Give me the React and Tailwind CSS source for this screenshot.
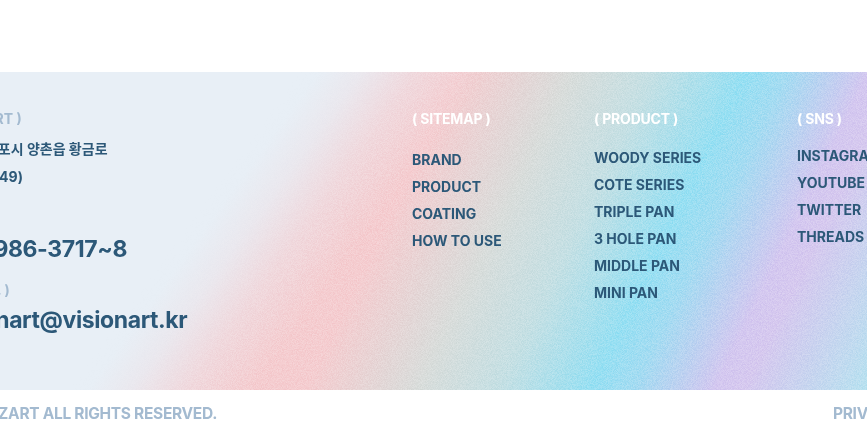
const font = { fontFamily: '"Inter","Noto Sans CJK KR",sans-serif' };

function Noise() {
  return (
    <svg className="absolute inset-0 w-full h-full opacity-[0.15] mix-blend-overlay [mask-image:linear-gradient(126deg,transparent_27%,black_40%)]" aria-hidden="true">
      <filter id="grain" colorInterpolationFilters="sRGB">
        <feTurbulence type="fractalNoise" baseFrequency="1.2" numOctaves="2" stitchTiles="stitch" />
        <feColorMatrix type="matrix" values="2.6 0 0 0 -0.8  2.6 0 0 0 -0.8  2.6 0 0 0 -0.8  0 0 0 0 1" />
      </filter>
      <rect width="100%" height="100%" filter="url(#grain)" />
    </svg>
  );
}

function Col({ title, items, width, listTop }) {
  return (
    <div className={width}>
      <div className="text-sm font-bold text-white leading-[20px] tracking-[-0.2px]">{title}</div>
      <ul className={`${listTop} flex flex-col gap-[7px]`}>
        {items.map((t) => (
          <li key={t} className="text-sm font-bold leading-[20px] text-[#2c5878] whitespace-nowrap">{t}</li>
        ))}
      </ul>
    </div>
  );
}

export default function App() {
  return (
    <div className="w-[867px] h-[446px] bg-white overflow-hidden" style={font}>
      <div className="h-[72px]" />
      <div className="relative h-[318px] overflow-hidden bg-[linear-gradient(126deg,#e8eff6_0%,#e8eff6_29%,rgba(232,239,246,0.8)_33%,rgba(232,239,246,0.35)_38%,rgba(232,239,246,0)_44%),linear-gradient(116deg,#f5cdd0_0%,#f5cdd0_45%,#d9dddb_56%,#c5e0e4_64%,#97e0f3_73%,#a4dcf2_77%,#d4c8f0_85%,#d6c9ef_88%,#b8e2f0_100%)]">
        <Noise />
        <div className="relative flex pt-[37px] -ml-[56px] w-[1100px]">
          <div className="w-[468px] shrink-0 text-[#2c5878]">
            <div className="ml-[9px] text-sm font-bold leading-[20px] text-[#a3bad0]">( BIZART )</div>
            <div className="mt-[10px] text-sm font-bold leading-[20px] -ml-[1px]">경기도 김포시 양촌읍 황금로</div>
            <div className="mt-[8px] ml-[4px] text-sm font-bold leading-[20px]">(우: 10049)</div>
            <div className="mt-[22px] text-sm font-bold leading-[20px] text-[#a3bad0]">( TEL. )</div>
            <div className="mt-[4px] text-[23px] font-bold leading-[32px] tracking-[-0.4px]">031-986-3717~8</div>
            <div className="mt-[15px] ml-[9px] text-sm font-bold leading-[20px] text-[#a3bad0]">( MAIL. )</div>
            <div className="mt-[4px] text-[23px] font-bold leading-[32px] tracking-[-0.4px]">visionart@visionart.kr</div>
          </div>
          <Col title="( SITEMAP )" width="w-[182px] shrink-0" listTop="mt-[21px]" items={["BRAND", "PRODUCT", "COATING", "HOW TO USE"]} />
          <Col title="( PRODUCT )" width="w-[203px] shrink-0" listTop="mt-[19px]" items={["WOODY SERIES", "COTE SERIES", "TRIPLE PAN", "3 HOLE PAN", "MIDDLE PAN", "MINI PAN"]} />
          <Col title="( SNS )" width="w-[160px] shrink-0" listTop="mt-[17px]" items={["INSTAGRAM", "YOUTUBE", "TWITTER", "THREADS"]} />
        </div>
      </div>
      <div className="flex justify-between items-center h-[48px] -ml-[128px] -mr-[92px] text-[15.5px] font-bold tracking-[-0.3px] text-[#a3bad0] whitespace-nowrap">
        <span>COPYRIGHT ⓒ BIZART ALL RIGHTS RESERVED.</span>
        <span>PRIVACY POLICY</span>
      </div>
    </div>
  );
}
